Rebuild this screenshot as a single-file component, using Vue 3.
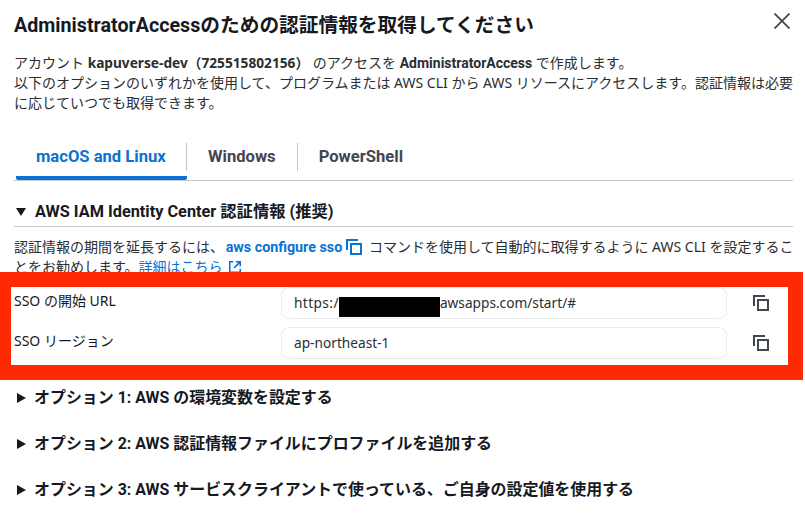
<script setup>
const tabs = [
  { label: 'macOS and Linux', active: true },
  { label: 'Windows' },
  { label: 'PowerShell' },
]
const fields = [
  { label: 'SSO の開始 URL', masked: true },
  { label: 'SSO リージョン', value: 'ap-northeast-1' },
]
const options = [
  'オプション 1: AWS の環境変数を設定する',
  'オプション 2: AWS 認証情報ファイルにプロファイルを追加する',
  'オプション 3: AWS サービスクライアントで使っている、ご自身の設定値を使用する',
]
</script>

<template>
  <div class="page">
    <header class="head">
      <h1>AdministratorAccessのための認証情報を取得してください</h1>
      <svg class="close" viewBox="0 0 16 16" aria-label="閉じる"><path d="M.5.5l15 15M15.5.5L.5 15.5" /></svg>
    </header>
    <p class="intro">
      アカウント <b class="acct">kapuverse-dev（725515802156）</b> のアクセスを <b>AdministratorAccess</b> で作成します。<br />
      以下のオプションのいずれかを使用して、プログラムまたは AWS CLI から AWS リソースにアクセスします。認証情報は必要に応じていつでも取得できます。
    </p>
    <nav class="tabs">
      <div v-for="t in tabs" :key="t.label" class="tab" :class="{ active: t.active }"><span>{{ t.label }}</span></div>
    </nav>
    <section class="sec">
      <h2 class="sum open"><i class="tri down"></i>AWS IAM Identity Center 認証情報 (推奨)</h2>
      <p class="desc">
        認証情報の期間を延長するには、 <b class="link cmd">aws configure sso</b>
        <svg class="copy inline" viewBox="0 0 16 16"><path d="M5 15V5h10v10zM1 11V1h11" /></svg>
        コマンドを使用して自動的に取得するように AWS CLI を設定することをお勧めします。<a class="link">詳細はこちら</a>
        <svg class="ext" viewBox="0 0 16 16"><path d="M6 2H2v12h12v-4M9 2h5v5M14 2L7 9" /></svg>
      </p>
    </section>
    <section class="box">
      <div v-for="f in fields" :key="f.label" class="row">
        <label>{{ f.label }}</label>
        <div class="input">
          <template v-if="f.masked"><span class="proto">https:/</span><span class="mask"></span>awsapps.com/start/#</template>
          <template v-else>{{ f.value }}</template>
        </div>
        <svg class="copy" viewBox="0 0 16 16"><path d="M5 15V5h10v10zM1 11V1h11" /></svg>
      </div>
    </section>
    <h2 v-for="o in options" :key="o" class="sum opt"><i class="tri right"></i>{{ o }}</h2>
  </div>
</template>

<style scoped>
.page {
  width: 805px;
  height: 525px;
  overflow: hidden;
  box-sizing: border-box;
  background: #fff;
  color: #16191f;
  font-family: "Noto Sans", "Noto Sans CJK JP", sans-serif;
  font-size: 14px;
  line-height: 20px;
  padding-top: 13px;
}
.head {
  display: flex;
  justify-content: space-between;
  padding: 0 15px 0 14px;
}
h1 {
  margin: 0;
  font-family: Roboto, "Noto Sans CJK JP", sans-serif;
  font-size: 19.7px;
  line-height: 26px;
  font-weight: 700;
}
.close {
  width: 16px;
  height: 16px;
  fill: none;
  stroke: #414750;
  stroke-width: 1.8;
}
.intro {
  margin: 14px 12px 0 14px;
  color: #2a2e33;
}
b {
  font-family: Roboto, "Noto Sans CJK JP", sans-serif;
  font-weight: 700;
}
.intro .acct {
  font-family: "Noto Sans", "Noto Sans CJK JP", sans-serif;
  font-size: 13.7px;
}
.tabs {
  display: flex;
  margin: 27px 12px 0 14px;
  border-bottom: 1px solid #c6c6cd;
  height: 40px;
  align-items: flex-start;
}
.tab {
  height: 40px;
  box-sizing: border-box;
  padding: 3px 0 0;
  font-family: Roboto, "Noto Sans CJK JP", sans-serif;
  font-weight: 700;
  font-size: 16.6px;
  color: #424650;
}
.tab span {
  display: block;
  line-height: 28px;
  padding: 0 21px;
  border-right: 1px solid #c6c6cd;
}
.tab:last-child span {
  border-right: 0;
}
.tab.active {
  color: #0972d3;
  margin-left: 2px;
  border-bottom: 4px solid #0972d3;
  border-radius: 2px;
  width: 171px;
}
.tab.active span {
  padding: 0 0 0 20px;
}
.sum {
  display: flex;
  align-items: center;
  margin: 0;
  font-family: Roboto, "Noto Sans CJK JP", sans-serif;
  font-size: 15.95px;
  font-weight: 700;
  line-height: 20px;
}
.sec {
  margin: 21px 12px 0 14px;
}
.open {
  font-size: 16.3px;
  padding-bottom: 4px;
  border-bottom: 1px solid #c6c6cd;
}
.tri {
  display: block;
  width: 0;
  height: 0;
  flex: none;
}
.tri.down {
  margin: 0 9px 0 2px;
  border-left: 5px solid transparent;
  border-right: 5px solid transparent;
  border-top: 8px solid #16191f;
}
.tri.right {
  margin: 0 8.5px 0 2.5px;
  border-top: 5px solid transparent;
  border-bottom: 5px solid transparent;
  border-left: 9px solid #16191f;
}
.desc {
  margin: 10px -3px 0 0;
  color: #2a2e33;
}
.link {
  color: #0972d3;
}
.cmd {
  margin-left: -2px;
  font-size: 14.3px;
}
.copy {
  width: 16px;
  height: 16px;
  fill: none;
  stroke: #414750;
  stroke-width: 2;
}
.copy.inline {
  stroke: #0972d3;
  vertical-align: -3px;
  margin: 0 3px 0 4px;
}
.ext {
  width: 14px;
  height: 14px;
  fill: none;
  stroke: #0972d3;
  stroke-width: 1.8;
  vertical-align: -2px;
  margin-left: 5px;
}
.box {
  position: relative;
  margin: -5px 2px 0 0;
  box-sizing: border-box;
  height: 108px;
  background: #fff;
  border: solid #fe2a04;
  border-width: 15px 15px 15px 11px;
}
.row {
  display: flex;
  align-items: flex-start;
  height: 40px;
}
.row label {
  width: 270px;
  padding: 4px 0 0 3px;
  box-sizing: border-box;
}
.input {
  width: 446px;
  height: 32px;
  box-sizing: border-box;
  border: 1px solid #e9ebed;
  border-radius: 8px;
  padding: 0 12px;
  line-height: 32px;
  display: flex;
  align-items: center;
  color: #2a2e33;
  font-size: 13.7px;
}
.proto {
  letter-spacing: 0.4px;
}
.mask {
  display: block;
  width: 101px;
  height: 20px;
  margin: 8px 0 0 0;
  background: #000;
}
.row .copy {
  margin: 8px 0 0 26px;
}
.opt {
  margin-left: 14px;
  margin-top: 26px;
}
.box + .opt {
  margin-top: 8px;
}
</style>
